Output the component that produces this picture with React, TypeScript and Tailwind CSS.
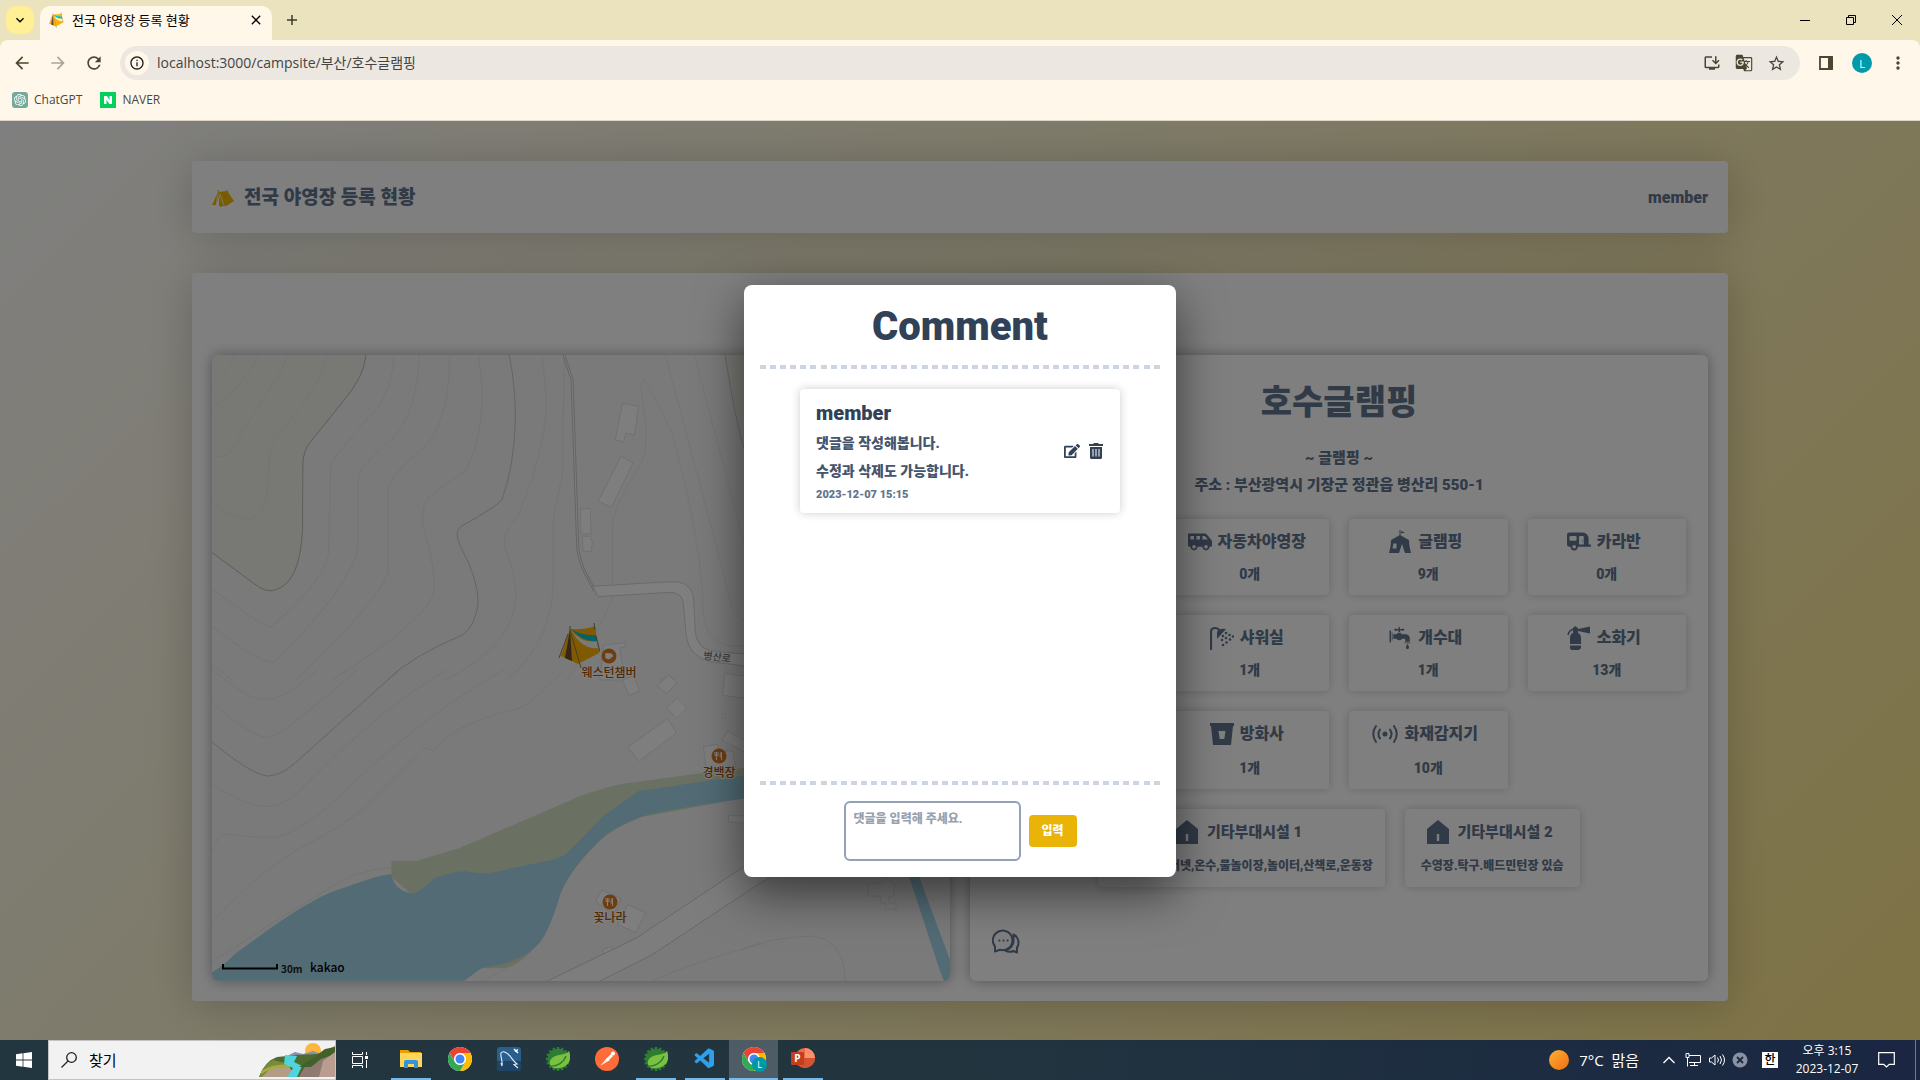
import type { ReactNode } from "react";
import { FaCaravan, FaEdit, FaShuttleVan } from "react-icons/fa";
import { GiTap } from "react-icons/gi";
import {
  MdArrowBack,
  MdArrowForward,
  MdClose,
  MdGTranslate,
  MdInfoOutline,
  MdInstallDesktop,
  MdKeyboardArrowDown,
  MdMoreVert,
  MdRefresh,
  MdStarOutline,
} from "react-icons/md";
import { SiOpenai } from "react-icons/si";
import { VscVscode } from "react-icons/vsc";

/* ---------- drawings ---------- */

function TentShapes() {
  return (
    <>
      <path d="M12 7 Q26 8 37 4 L41 31 L20 42 L3 34 Z" fill="#ffb400" />
      <path d="M12 8 L14 39 L7 36 Z" fill="#6b4a35" />
      <path d="M13 7 Q24 14 38 13 L39 19 Q26 21 13 7 Z" fill="#00c4d8" />
      <path d="M13 8 Q24 22 39 19 L40 26 Q24 28 13 8 Z" fill="#f4f4f4" />
      <path d="M12 4 L12 8 M36 1 L37 8 M12 8 L23 46 M38 14 L42 30 M10 12 L1 36" stroke="#8b7a55" fill="none" />
    </>
  );
}

function TentLogo() {
  return (
    <svg viewBox="0 0 22 17" className="h-[17px] w-[22px]" aria-hidden="true">
      <path d="M7 2 L15 1 L22 11 L14 16 L9 16 Z" fill="#f5b800" />
      <path d="M6 2 L0 15 L4 15 L7 6 L7 16 L10 17 Z" fill="#f5b800" />
      <path d="M6 0 L7 3 L13 16 M15 0 L16 3" stroke="#f5b800" strokeWidth="1" />
      <path d="M7.500 3 L12 15 M5.500 5 L4.500 15" stroke="#fff" strokeWidth=".8" />
    </svg>
  );
}

function CampIcon() {
  return (
    <svg viewBox="0 0 24 26" className="h-[26px] w-6" fill="currentColor" aria-hidden="true">
      <path d="M11.500 1h1v6h-1z" />
      <path d="M13 2l4 1.500-4 1z" />
      <path fillRule="evenodd" d="M12 6 L21 11 C21 16 22 20 23 24 L17 24 L14 15 L11 24 L1 24 C2 20 3 16 3 11 Z M5.500 14.500 h3 v5 h-4z" />
    </svg>
  );
}

function ShowerIcon() {
  return (
    <svg viewBox="0 0 24 24" className="size-6" fill="currentColor" aria-hidden="true">
      <path d="M1 23V6Q1 2 5 2q3 0 4 2" fill="none" stroke="currentColor" strokeWidth="2.200" strokeLinecap="round" />
      <path d="M7 13V6q2-4 9-3z" />
      {[[13, 10], [16, 7], [12, 14], [16, 12], [19.5, 9], [13, 19], [16.500, 16.500], [20, 13.500], [23, 10.500]].map(([x, y]) => (
        <circle key={`${x}-${y}`} cx={x} cy={y} r="1.300" />
      ))}
    </svg>
  );
}

function ExtinguisherIcon() {
  return (
    <svg viewBox="0 0 24 24" className="size-6" fill="currentColor" aria-hidden="true">
      <path d="M3 18V12q0-4 3-5V2l2-2 3 2v1l12-2.500v7L11 5v2q3 1 3 5v6z" />
      <path d="M3 19.500h11V22q-1 2-3 2H6q-3 0-3-2z" />
      <path d="M7 3Q2 4 1 9" fill="none" stroke="currentColor" strokeWidth="1.500" />
    </svg>
  );
}

function BucketIcon() {
  return (
    <svg viewBox="0 0 24 24" className="size-6" fill="currentColor" aria-hidden="true">
      <path fillRule="evenodd" d="M0 1h24v3h-1l-2 19H3L1 4H0z M8.500 9h7l-1.200 8h-4.600z" />
    </svg>
  );
}

function SensorIcon() {
  return (
    <svg viewBox="0 0 26 24" className="h-6 w-[26px]" fill="none" stroke="currentColor" strokeWidth="2" strokeLinecap="round" aria-hidden="true">
      <circle cx="13" cy="12" r="1.500" fill="currentColor" />
      <path d="M8 7.500q-3 4.500 0 9M18 7.500q3 4.500 0 9M4 4q-5.500 8 0 16M22 4q5.500 8 0 16" />
    </svg>
  );
}

function HouseIcon() {
  return (
    <svg viewBox="0 0 24 24" className="size-6" fill="currentColor" aria-hidden="true">
      <path fillRule="evenodd" d="M12 0 L23 9 V24 H1 V9 Z M10.800 14 h2.400 v7 h-2.400z" />
    </svg>
  );
}

function ChatIcon() {
  return (
    <svg viewBox="0 0 28 26" className="h-[26px] w-7" fill="none" stroke="currentColor" strokeWidth="2" strokeLinejoin="round" aria-hidden="true">
      <path d="M3 22.500v-5A9.800 9.800 0 1 1 8 20.800z" />
      <path d="M21.500 5.500a9 9 0 0 1 3.500 13v5l-3.500-1.500a9 9 0 0 1-8.500-.7c5.500-1 9-5 8.500-11z" />
      <path d="M6.500 11.500h1.800M10.600 11.500h1.800M14.700 11.500h1.800" />
    </svg>
  );
}

function TrashIcon() {
  return (
    <svg viewBox="0 0 16 18" className="h-[18px] w-4" aria-hidden="true">
      <path d="M1 2h4l1-1h4l1 1h4v2H1z" fill="#334155" />
      <path d="M2 5h12v10.500a1.500 1.500 0 0 1-1.500 1.500h-9A1.500 1.500 0 0 1 2 15.500z" fill="#334155" />
      <path d="M5 7v7.500M8 7v7.500M11 7v7.500" stroke="#b9c0ca" strokeWidth="1.500" />
    </svg>
  );
}

function Food({ x, y, cup }: { x: number; y: number; cup?: boolean }) {
  return (
    <g transform={`translate(${x} ${y})`}>
      <circle r="7.500" fill="#dc7a22" />
      {cup ? (
        <path d="M-3.500 -2.500h5.500v3.500q0 2-2.700 2t-2.800-2z M2 -1.500h1.500v2.500h-1.500" fill="#fff" stroke="#fff" strokeWidth=".6" />
      ) : (
        <path d="M-2.500 4v-4M-4 -4v3.500h3V-4M-2.500 -4v3M2.500 4v-8q-1.500 1-1.500 5h1.500" stroke="#fff" fill="none" />
      )}
    </g>
  );
}

const upperContours = [
  "M34 104 Q75 75 100 14", "M34 175 Q120 115 163 14", "M34 315 Q70 330 88 300 L200 105 Q240 50 243 14",
  "M34 460 Q180 575 190 410 Q193 290 208 270 Q350 90 355 14",
  "M34 718 Q190 840 200 830 Q350 690 360 610 L366 345 Q380 310 500 170 Q545 90 542 14",
  "M34 830 Q180 950 210 935 Q430 700 442 590 L443 380 Q455 340 540 265 Q610 180 614 14",
  "M34 945 L90 990 M270 990 Q520 730 527 660 L526 420 Q535 370 620 300 Q700 220 699 14",
  "M370 990 Q650 800 656 720 Q660 660 625 530 Q615 450 660 425 L745 360 Q795 260 790 110 L780 14",
  "M690 990 Q885 880 885 735 Q885 680 853 590 Q845 550 890 500 Q990 240 965 90 L958 14",
  "M860 990 Q990 870 989 690 V520 Q1000 430 1015 380 L1020 14",
  "M1030 990 Q1150 780 1155 740 L1155 520 Q1160 470 1235 340 Q1260 290 1240 150 Q1230 90 1245 90 Q1320 230 1330 280 Q1405 590 1408 760 Q1405 900 1523 888",
  "M1303 14 Q1480 720 1487 760 Q1500 805 1523 812", "M1384 14 Q1480 400 1523 580",
];
const lowerContours = [
  "M34 0 L110 60 Q190 120 270 50 L330 0", "M34 98 Q150 205 190 203 Q220 205 440 0",
  "M34 345 Q130 408 190 410 Q245 408 310 330 Q500 120 690 0",
  "M34 545 Q50 490 75 493 Q180 507 220 500 Q290 480 400 370 Q620 140 850 0",
  "M34 755 Q150 620 270 540 Q400 470 460 415 L630 233 L655 242 Q700 190 730 175 Q800 140 850 125 Q900 120 930 92 L1020 0",
  "M34 875 Q300 690 420 620 Q460 602 536 592", "M788 932 L880 885", "M1265 932 Q1400 870 1568 823",
];

function CampMap() {
  return (
    <svg viewBox="0 0 738 626" preserveAspectRatio="xMinYMin slice" className="block h-full w-full" role="img" aria-label="지도">
      <rect width="738" height="626" fill="#f2f5f3" />
      <g transform="matrix(.3571 0 0 .3333 -12 -5)">
        <path d="M34 14 H465 Q460 80 400 155 L310 275 Q290 300 288 340 L287 540 Q280 700 210 720 Q185 730 150 700 L34 608 Z" fill="#f1f3eb" />
        <path d="M1470 14 Q1500 210 1568 400 V14Z" fill="#f1f3eb" />
        <g fill="none" stroke="#e6e8e6" strokeWidth="1">
          {upperContours.map((d) => <path key={d} d={d} vectorEffect="non-scaling-stroke" />)}
        </g>
        <g fill="none" stroke="#caccc5" strokeWidth="1">
          <path vectorEffect="non-scaling-stroke" stroke="#b9bcb1" d="M465 14 Q460 80 400 155 L310 275 Q290 300 288 340 L287 540 Q280 700 210 720 Q185 730 150 700 L34 608" />
          <path vectorEffect="non-scaling-stroke" d="M866 14 Q885 120 883 210 Q880 350 845 450 Q830 470 730 530 Q710 550 730 590 Q780 690 779 760 Q770 830 735 855 Q590 920 525 990" />
          <path vectorEffect="non-scaling-stroke" d="M1470 14 Q1500 210 1523 295" />
        </g>
        <path vectorEffect="non-scaling-stroke" d="M1019 14 L1042 90 L1058 600 Q1070 660 1090 690 L1105 722" fill="none" stroke="#cfc8c8" strokeWidth="3" />
        <path vectorEffect="non-scaling-stroke" d="M1019 14 L1042 90 L1058 600 Q1070 660 1090 690 L1105 722" fill="none" stroke="#fafafa" strokeWidth="1" />
        <path vectorEffect="non-scaling-stroke" d="M1100 709 L1300 696 H1340 Q1385 705 1383 760 L1387 850 Q1395 895 1430 902 L1568 917 V954 L1430 935 Q1370 920 1362 860 L1353 755 Q1348 730 1320 727 L1114 740 Z" fill="#fff" stroke="#d4d4d4" />
        <g fill="#fdfdfd" stroke="#e4e0e0">
          {["M1183 160 L1228 168 1217 255 1192 250 1187 275 1163 271Z", "M1179 319 L1213 338 1152 472 1115 454Z", "M1065 476 h28 l2 76 h-28z", "M1071 559 h23 l5 20 -3 25 h-24z", "M1130 885 L1192 878 V890 L1175 893 1190 990 H1120Z", "M1290 990 L1313 975 1330 990Z", "M1470 972 L1568 985 V1010 H1466Z"].map((d) => (
            <path key={d} d={d} vectorEffect="non-scaling-stroke" />
          ))}
        </g>
      </g>
      <g transform="matrix(.3571 0 0 .3333 -12 315)">
        <g fill="none" stroke="#e6e8e6">
          {lowerContours.map((d) => <path key={d} d={d} vectorEffect="non-scaling-stroke" />)}
          <path vectorEffect="non-scaling-stroke" stroke="#caccc5" d="M34 216 Q145 315 190 318 Q225 318 265 280 L557 0" />
        </g>
        <path fill="#d4e3c4" d="M536 573 H605 L725 535 L1065 378 Q1120 357 1175 343 L1400 310 L1700 270 V350 L1240 440 Q1140 480 1100 535 Q1000 640 975 770 Q920 880 850 895 H780 L600 680 L536 620Z" />
        <path fill="#a4d6ea" d="M34 907 Q70 885 100 850 L210 765 Q340 670 400 655 Q500 615 536 613 Q545 665 597 671 Q620 665 655 625 Q720 600 745 604 Q800 615 815 608 L985 570 L1022 555 L1130 437 L1228 363 L1480 323 L1700 290 V360 L1480 392 Q1300 420 1235 440 Q1155 475 1130 500 Q1040 590 1010 670 Q980 780 950 820 Q900 880 790 893 L740 932 H34Z" />
        <g fill="#fdfdfd" stroke="#e4e0e0">
          {["M1183 30 L1213 18 1232 62 1202 77Z", "M1313 15 L1335 38 1307 71 1280 47Z", "M1336 83 L1364 115 1335 145 1306 115Z", "M1309 146 L1335 189 1230 273 1198 232Z", "M1470 10 L1568 25 V90 L1463 76Z", "M1410 230 L1450 222 1453 245 1493 242 1500 300 H1417Z", "M1478 184 L1568 235 V270 L1462 211Z", "M1480 437 H1568 V465 L1480 455Z", "M1125 660 L1180 686 1160 732 1107 695Z", "M1198 704 L1248 728 1220 788 1170 764Z", "M1127 839 L1153 829 1158 842 1131 852Z", "M1463 132 h8 v15 h-8z"].map((d) => (
            <path key={d} d={d} vectorEffect="non-scaling-stroke" />
          ))}
        </g>
        <path vectorEffect="non-scaling-stroke" d="M960 940 L1222 804 L1523 590 L1700 460 V560 L1568 640 L1265 855 L1108 940Z" fill="#fbfbfb" stroke="#cfcfcf" />
      </g>
      <path d="M690 500 L699 500 L738 605 V626 H732 L728 616Z" fill="#a4d6ea" />
      <path d="M656 528 h12 l6 -6 11 9 h-3 v10 h-5 v7 h7 v6 h-10 v-6 h-5 v-7 h-13z" fill="#f7f7f7" stroke="#e0e0e0" />
      <path d="M528 595 Q560 582 600 581 Q633 585 633 626" fill="none" stroke="#e2e4e1" />
      <svg x="346" y="267" width="42" height="46" viewBox="0 0 42 46">
        <TentShapes />
      </svg>
      <Food x={397} y={301} cup />
      <Food x={507} y={401} />
      <Food x={398} y={547} />
      <g className="text-[12px]" fill="#a65204" textAnchor="middle" stroke="#fff" strokeWidth="2" paintOrder="stroke" fontWeight="500">
        <text x="397" y="322">웨스턴챔버</text>
        <text x="507" y="422">경백장</text>
        <text x="398" y="567">꽃나라</text>
      </g>
      <text x="491" y="304" transform="rotate(7 491 304)" className="text-[10px]" fill="#777">병산로</text>
      <path d="M11 609 V613.500 H65 V609" fill="none" stroke="#000" strokeWidth="2" />
      <text x="69" y="618" className="text-[10px] font-bold" fill="#222">30m</text>
      <text x="98" y="617" className="text-[12px] font-medium" fill="#000">kakao</text>
    </svg>
  );
}

/* ---------- page parts ---------- */

function BrowserBar() {
  return (
    <header className="font-['Open_Sans','Noto_Sans_CJK_KR',sans-serif] text-[#3d3a2e]">
      <div className="flex h-10 items-start bg-[#ebe3bd]">
        <button aria-label="탭 검색" className="mt-1.5 ml-1.5 grid size-7 place-items-center rounded-[10px] bg-[#fff095] text-black">
          <MdKeyboardArrowDown className="size-4" />
        </button>
        <div className="mt-1.5 ml-1.5 flex h-[34px] w-[232px] items-center rounded-t-[10px] bg-[#fff8ea] pr-2 pb-1.5 pl-2">
          <svg viewBox="0 0 42 46" className="size-4" aria-hidden="true"><TentShapes /></svg>
          <span className="ml-2 flex-1 text-[13px] leading-5 text-black">전국 야영장 등록 현황</span>
          <button aria-label="탭 닫기" className="text-black"><MdClose className="size-4" /></button>
        </div>
        <button aria-label="새 탭" className="mt-2.5 ml-2.5 grid size-5 place-items-center">
          <svg viewBox="0 0 12 12" className="size-3" stroke="currentColor" strokeWidth="1.500" aria-hidden="true"><path d="M6 1v10M1 6h10" /></svg>
        </button>
        <div className="ml-auto flex h-10 items-center text-black">
          <button aria-label="최소화" className="grid h-10 w-[46px] place-items-center"><svg viewBox="0 0 10 10" className="size-2.5" stroke="currentColor"><path d="M0 5.500h10" /></svg></button>
          <button aria-label="이전 크기로" className="grid h-10 w-[46px] place-items-center"><svg viewBox="0 0 10 10" className="size-2.5" stroke="currentColor" fill="none"><path d="M.5 2.500h7v7h-7zM2.500 2.500v-2h7v7h-2" /></svg></button>
          <button aria-label="닫기" className="grid h-10 w-[46px] place-items-center"><svg viewBox="0 0 10 10" className="size-2.5" stroke="currentColor"><path d="M0 0l10 10M10 0L0 10" /></svg></button>
        </div>
      </div>
      <div className="bg-[#ebe3bd]">
        <div className="flex h-[46px] items-center rounded-t-lg bg-[#fff8ea] pl-3 text-[#4a4630]">
          <button aria-label="뒤로"><MdArrowBack className="size-5" /></button>
          <button aria-label="앞으로" className="ml-4 text-[#aaa697]"><MdArrowForward className="size-5" /></button>
          <button aria-label="새로고침" className="ml-4"><MdRefresh className="size-5" /></button>
          <div className="ml-4 flex h-[34px] flex-1 items-center rounded-full bg-[#ece7e0] pr-3.5 pl-[5px]">
            <span className="grid size-6 place-items-center rounded-full bg-[#fff8ea] text-[#1f1f1f]"><MdInfoOutline className="size-4" /></span>
            <input aria-label="주소" readOnly value="localhost:3000/campsite/부산/호수글램핑" className="ml-2 min-w-0 flex-1 bg-transparent text-sm text-[#444] outline-none" />
            <button aria-label="앱 설치"><MdInstallDesktop className="size-[18px]" /></button>
            <button aria-label="번역" className="ml-3.5"><MdGTranslate className="size-[18px]" /></button>
            <button aria-label="북마크" className="ml-3.5"><MdStarOutline className="size-[19px]" /></button>
          </div>
          <button aria-label="사이드 패널" className="ml-[18px]">
            <svg viewBox="0 0 16 16" className="size-4" aria-hidden="true"><path d="M2 2h12v12H2z" fill="none" stroke="#4a4630" strokeWidth="1.800" /><path d="M10 2h5v12h-5z" fill="#4a4630" /></svg>
          </button>
          <button className="ml-[18px] grid size-5 place-items-center rounded-full bg-[#009aaa] text-[11px] leading-none text-white">L</button>
          <button aria-label="메뉴" className="mr-3 ml-4"><MdMoreVert className="size-5" /></button>
        </div>
      </div>
      <nav className="flex h-[35px] items-center border-b border-[#ddd6c8] bg-[#fff8ea] px-3 pb-1.5 text-[12px] text-[#4a4640]">
        <a href="#chatgpt" className="flex items-center gap-1.5"><span className="grid size-4 place-items-center rounded-[3px] bg-[#75a99c] text-white"><SiOpenai className="size-3" /></span>ChatGPT</a>
        <a href="#naver" className="ml-[18px] flex items-center gap-1.5">
          <svg viewBox="0 0 16 16" className="size-4" aria-hidden="true"><path fill="#03cf5d" d="M0 0h16v16H0z" /><path fill="#fff" d="M4 4h3l2.500 4V4H12v8H9.500L6.500 8v4H4z" /></svg>NAVER
        </a>
      </nav>
    </header>
  );
}

function Facility({ icon, label, value, place = "", tall = false }: { icon: ReactNode; label: string; value: string; place?: string; tall?: boolean }) {
  return (
    <div className={`rounded-[4px] bg-white pt-[11px] text-center shadow-[0_0_10px_rgba(0,0,0,0.2)] ${tall ? "h-[78px]" : "h-[76px]"} ${place}`}>
      <div className="flex h-6 items-center justify-center gap-1.5 pr-1.5 text-[16px]">{icon}<span>{label}</span></div>
      <p className={`text-[14px] leading-6 ${tall ? "mt-2.5" : "mt-2"}`}>{value}</p>
    </div>
  );
}

function ExtraFacility({ label, value, padding }: { label: string; value: string; padding: string }) {
  return (
    <div className={`h-[78px] rounded-[4px] bg-white pt-[11px] text-center shadow-[0_0_10px_rgba(0,0,0,0.2)] ${padding}`}>
      <div className="flex h-6 items-center justify-center gap-2 pr-1.5 text-[15px]"><HouseIcon /><span>{label}</span></div>
      <p className="mt-2.5 text-[12px] leading-6 whitespace-nowrap">{value}</p>
    </div>
  );
}

function DashedRule() {
  return (
    <div className="flex h-1 justify-between" role="separator">
      {Array.from({ length: 40 }, (_, i) => <span key={i} className="w-1.5 bg-[#cbd5e1]" />)}
    </div>
  );
}

function CommentDialog() {
  return (
    <section role="dialog" aria-label="Comment" className="flex h-[592px] w-[432px] flex-col rounded-lg bg-white p-4 text-slate-700 shadow-[0_16px_48px_rgba(0,0,0,0.55)]">
      <h1 className="pt-0.5 pb-3.5 text-center text-[40px] leading-[48px] font-black">Comment</h1>
      <DashedRule />
      <div className="flex-1 px-10 pt-5">
        <article className="flex items-center rounded-[4px] bg-white px-4 py-2.5 shadow-[0_0_10px_rgba(0,0,0,0.2)]">
          <div className="flex-1">
            <h2 className="text-[20px] leading-7">member</h2>
            <p className="mt-0.5 text-[14px] leading-7 text-slate-600">댓글을 작성해봅니다.<br />수정과 삭제도 가능합니다.</p>
            <time className="mt-0.5 block text-[11px] leading-4 text-slate-500">2023-12-07 15:15</time>
          </div>
          <button aria-label="수정"><FaEdit className="size-4" /></button>
          <button aria-label="삭제" className="ml-2"><TrashIcon /></button>
        </article>
      </div>
      <DashedRule />
      <form className="flex items-center justify-center gap-2 pt-4">
        <textarea aria-label="댓글" placeholder="댓글을 입력해 주세요." className="block h-[60px] w-[177px] resize-none rounded-md border-2 border-slate-400 px-2 py-1.5 text-[12px] leading-5 placeholder:text-gray-400" />
        <button type="button" className="h-8 w-12 rounded-[4px] bg-[#eab308] text-[12px] text-white">입력</button>
      </form>
    </section>
  );
}

/* ---------- taskbar ---------- */

function ChromeLogo({ badge = false }: { badge?: boolean }) {
  return (
    <svg viewBox="0 0 26 25" className="h-[25px] w-[26px]" aria-hidden="true">
      <circle cx="13" cy="12" r="12" fill="#fff" />
      <path d="M2.600 6A12 12 0 0 1 23.400 6H13a6 6 0 0 0-5.200 9z" fill="#ea4335" />
      <path d="M23.400 6A12 12 0 0 1 13 24l5.200-9A6 6 0 0 0 13 6z" fill="#fbbc04" />
      <path d="M13 24A12 12 0 0 1 2.600 6l5.200 9a6 6 0 0 0 10.400 0z" fill="#34a853" />
      <circle cx="13" cy="12" r="5.500" fill="#fff" />
      <circle cx="13" cy="12" r="4.500" fill="#4285f4" />
      {badge && <><circle cx="18.500" cy="17.500" r="7.500" fill="#0097a7" /><text x="18.500" y="21" fontSize="9" textAnchor="middle" fill="#fff">L</text></>}
    </svg>
  );
}

function SpringLogo() {
  const teeth = Array.from({ length: 16 }, (_, i) => i * 22.5);
  return (
    <svg viewBox="0 0 24 24" className="size-6" aria-hidden="true">
      <circle cx="12" cy="12" r="10.500" fill="#2e7d32" />
      {teeth.map((a) => <path key={a} d="M10.800 0h2.400v4h-2.400z" fill="#2e7d32" transform={`rotate(${a} 12 12)`} />)}
      <path d="M23 4C19 9 10 6 5 12c-3 5 0 8 3 9 9 1 15-3 16-9 .3-3 0-6-1-8z" fill="#7ac143" />
      <path d="M4 19C11 20 18 15 20 9" stroke="#2e7d32" strokeWidth="1.300" fill="none" />
    </svg>
  );
}

const taskApps: { name: string; icon: ReactNode; open?: boolean; active?: boolean }[] = [
  {
    name: "파일 탐색기", open: true,
    icon: <svg viewBox="0 0 22 18" className="h-[18px] w-[22px]"><path d="M0 0h8l2 2h11v15H0z" fill="#e8a000" /><path d="M0 3h22v14H0z" fill="#ffd65c" /><path d="M4 18v-6q0-2 2-2h10q2 0 2 2v6h-4v-4H8v4z" fill="#3295dc" /></svg>,
  },
  { name: "Chrome", icon: <ChromeLogo /> },
  {
    name: "MySQL Workbench",
    icon: <svg viewBox="0 0 24 24" className="size-6"><rect width="24" height="24" rx="3" fill="#285f8c" /><path d="M0 14h24v7a3 3 0 0 1-3 3H3a3 3 0 0 1-3-3z" fill="#1e4566" /><path d="M5 19C6 14 3 9 4 6c2-3 6 0 9 3 3 4 4 6 7 8l-3 .5 4 3.500M5 19l-1-3" stroke="#e6eef5" strokeWidth="1.100" fill="none" /><path d="M17 2l4 4M18 4.500l3-2" stroke="#fff" strokeWidth="1.500" /></svg>,
  },
  { name: "Spring Tool Suite", icon: <SpringLogo /> },
  {
    name: "Postman",
    icon: <svg viewBox="0 0 24 24" className="size-6"><circle cx="12" cy="12" r="12" fill="#ff6c37" /><path d="M5 19l7-8 3 2z" fill="#fff" opacity=".9" /><path d="M11 12l5-5 2 2-5 5z" fill="#fff" /><circle cx="18" cy="6.500" r="2" fill="#fff" /></svg>,
  },
  { name: "Spring", icon: <SpringLogo />, open: true },
  { name: "Visual Studio Code", icon: <VscVscode className="size-6 text-[#2da0ec]" />, open: true },
  { name: "Chrome L", icon: <ChromeLogo badge />, open: true, active: true },
  {
    name: "PowerPoint", open: true,
    icon: <svg viewBox="0 0 24 24" className="size-6"><circle cx="14" cy="11" r="10" fill="#ed6c47" /><path d="M14 1a10 10 0 0 1 10 10H14z" fill="#ff8f6b" /><path d="M4 11h20a10 10 0 0 1-20 0z" fill="#d35230" /><rect y="5" width="13" height="13" rx="1" fill="#c43e1c" /><text x="6.500" y="15" fontSize="10" fontWeight="700" textAnchor="middle" fill="#fff">P</text></svg>,
  },
];

function Landscape() {
  return (
    <svg viewBox="0 0 76 34" className="h-[34px] w-[76px]" aria-hidden="true">
      <circle cx="54" cy="8" r="8" fill="#ffb63c" />
      <path d="M26 14l10-5 8 2 10-3 12 4v6H24z" fill="#8791a8" />
      <path d="M18 14l20-2 38-2v24H0Q6 18 18 14z" fill="#4e6b2f" />
      <path d="M0 34Q4 22 14 17l16 4 4 13z" fill="#7f8a38" />
      <path d="M3 34l9-9 18-1 8 10z" fill="#b59c86" />
      <path d="M2 28q14-8 30-6l-2 3q-14-2-28 6z" fill="#a3ad45" />
      <path d="M26 12l12 1-3 6 8 4-5 11H28l6-9-9-4z" fill="#4fd3dc" />
      <path d="M40 34l8-14 18-12 10-5v31z" fill="#8f7a72" />
      <path d="M40 24l14-9 12-9 10-2v7l-14 5-10 8z" fill="#41602a" />
      <path d="M60 34l4-16 12-9v25z" fill="#b99d90" />
    </svg>
  );
}

function Taskbar() {
  return (
    <footer className="flex h-10 items-center bg-linear-to-r from-[#22363f] via-[#22353f] to-[#1a2642] font-['Open_Sans','Noto_Sans_CJK_KR',sans-serif] text-white">
      <button aria-label="시작" className="grid h-10 w-12 place-items-center">
        <svg viewBox="0 0 16 16" className="size-4" fill="#fff"><path d="M0 2.300L6.600 1.300v6.200H0zM7.400 1.200L16 0v7.500H7.400zM0 8.400h6.600v6.300L0 13.700zM7.400 8.400H16V16l-8.600-1.200z" /></svg>
      </button>
      <label className="flex h-10 w-72 items-center overflow-hidden border border-[#c4c4c4] bg-[#f2f2f2] pl-3 text-black">
        <svg viewBox="0 0 16 16" className="size-4" fill="none" stroke="#222" strokeWidth="1.300"><circle cx="10.500" cy="5.500" r="4.800" /><path d="M7 9L.5 15.500" /></svg>
        <input aria-label="찾기" defaultValue="찾기" className="ml-3 w-0 flex-1 bg-transparent text-[15px] outline-none" />
        <Landscape />
      </label>
      <button aria-label="작업 보기" className="grid h-10 w-[50px] place-items-center pr-0.5">
        <svg viewBox="0 0 16 16" className="size-4" fill="none" stroke="#fff"><path d="M.5 4.500h10v7H.5zM.5 0v2.500h10V0M.5 16v-2.500h10V16M14.500 0v3M14.500 8v8" /><path d="M13 4h3v3h-3z" fill="#fff" stroke="none" /></svg>
      </button>
      {taskApps.map((app) => (
        <button key={app.name} aria-label={app.name} className={`flex h-10 w-[49px] flex-col items-center ${app.active ? "bg-white/20" : ""}`}>
          <span className="grid h-[38px] place-items-center">{app.icon}</span>
          {app.open && <span className={`h-0.5 bg-[#76b9ed] ${app.active ? "w-full" : "w-10"}`} />}
        </button>
      ))}
      <div className="ml-auto flex h-10 items-center">
        <span className="size-5 rounded-full bg-linear-to-br from-[#f9b233] to-[#f26a10]" />
        <span className="ml-2.5 text-[15px] whitespace-pre">7°C  맑음</span>
        <svg viewBox="0 0 12 8" className="ml-6 h-2 w-3" fill="none" stroke="#fff" strokeWidth="1.300"><path d="M.5 7L6 1.500 11.500 7" /></svg>
        <svg viewBox="0 0 16 14" className="ml-2.5 h-3.5 w-4" fill="none" stroke="#fff"><path d="M4 2.500h11.500v7H4M1 .5h3v4H1zM2.500 4.500v9M5 12.500h8M9.500 9.500v3" /></svg>
        <svg viewBox="0 0 17 14" className="ml-2 h-3.5 w-[17px]" fill="none" stroke="#fff"><path d="M.5 5h2L6 2v10L2.500 9h-2zM8.500 4.500q2 2.500 0 5M11 3q3 4 0 8M13.500 1.500q4 5.500 0 11" /></svg>
        <svg viewBox="0 0 16 16" className="ml-1.5 size-4"><circle cx="8" cy="8" r="7.500" fill="#8a92a3" /><path d="M5 5l6 6M11 5l-6 6" stroke="#1c2a40" strokeWidth="1.800" /></svg>
        <span className="ml-3.5 grid size-4 place-items-center bg-white text-[12px] leading-none font-medium text-black">한</span>
        <time className="ml-3.5 w-[70px] text-center text-[12px] leading-[18px] whitespace-nowrap">오후 3:15<br />2023-12-07</time>
        <svg viewBox="0 0 17 16" className="ml-4 h-4 w-[17px]" fill="none" stroke="#fff" strokeWidth="1.200"><path d="M.7.7h15.600v11.600h-5L8.500 15l-2.800-2.700h-5z" /></svg>
        <span className="mr-1 ml-5 h-10 w-px bg-white/40" />
      </div>
    </footer>
  );
}

export default function App() {
  return (
    <div className="flex min-h-screen flex-col">
      <BrowserBar />
      <div className="relative flex flex-1 flex-col bg-[linear-gradient(135deg,#ffffff_0%,#fdf6d2_40%,#fde68a_100%)] px-[10%] pt-10 pb-[39px] font-['Roboto','Noto_Sans_CJK_KR',sans-serif] font-black text-slate-500">
        <header className="flex h-[72px] items-center rounded-[4px] bg-white px-5 pt-0.5 shadow-[0_4px_44px_rgba(0,0,0,0.2)]">
          <TentLogo />
          <a href="#home" className="ml-2.5 text-[19px]">전국 야영장 등록 현황</a>
          <a href="#member" className="ml-auto text-[16px]">member</a>
        </header>
        <main className="mt-10 grid flex-1 grid-cols-2 gap-5 rounded-[4px] bg-white px-5 pt-[82px] pb-5 shadow-[0_4px_44px_rgba(0,0,0,0.2)]">
          <section className="h-0 min-h-full overflow-hidden rounded-md font-['Noto_Sans_CJK_KR',sans-serif] font-medium shadow-[0_0_14px_rgba(0,0,0,0.35)]">
            <CampMap />
          </section>
          <section className="flex flex-col rounded-md bg-white px-[22px] pt-5 pb-[26px] shadow-[0_0_14px_rgba(0,0,0,0.35)]">
            <div className="text-center">
              <h1 className="text-[34px] leading-[54px]">호수글램핑</h1>
              <p className="mt-4 text-[15px] leading-[27px]">~ 글램핑 ~<br />주소 : 부산광역시 기장군 정관읍 병산리 550-1</p>
            </div>
            <div className="mt-5 grid grid-cols-4 gap-5">
              <Facility place="col-start-2" icon={<FaShuttleVan className="size-6" />} label="자동차야영장" value="0개" />
              <Facility icon={<CampIcon />} label="글램핑" value="9개" />
              <Facility icon={<FaCaravan className="size-6" />} label="카라반" value="0개" />
              <Facility place="col-start-2" icon={<ShowerIcon />} label="샤워실" value="1개" />
              <Facility icon={<GiTap className="size-6" />} label="개수대" value="1개" />
              <Facility icon={<ExtinguisherIcon />} label="소화기" value="13개" />
              <Facility tall place="col-start-2" icon={<BucketIcon />} label="방화사" value="1개" />
              <Facility tall icon={<SensorIcon />} label="화재감지기" value="10개" />
            </div>
            <div className="mt-5 flex justify-center gap-5">
              <ExtraFacility padding="px-3" label="기타부대시설 1" value="전기,무선인터넷,온수,물놀이장,놀이터,산책로,운동장" />
              <ExtraFacility padding="px-4" label="기타부대시설 2" value="수영장.탁구.배드민턴장 있슴" />
            </div>
            <button aria-label="댓글" className="mt-auto self-start"><ChatIcon /></button>
          </section>
        </main>
        <div className="absolute inset-0 flex items-center justify-center bg-black/50">
          <CommentDialog />
        </div>
      </div>
      <Taskbar />
    </div>
  );
}
